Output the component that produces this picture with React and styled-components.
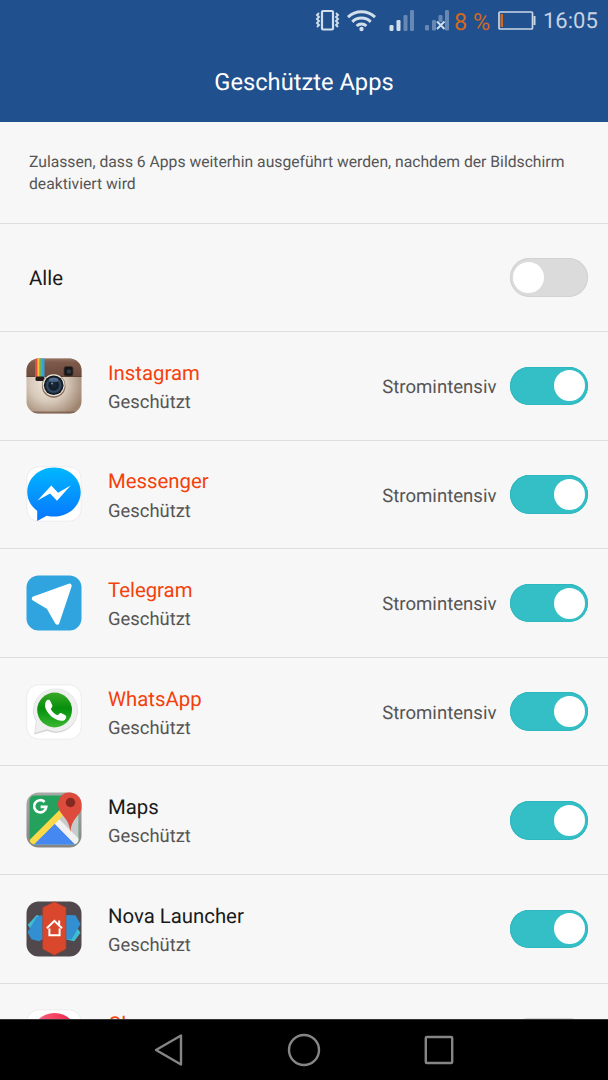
import React from 'react';
import styled, { createGlobalStyle } from 'styled-components';

const GlobalStyle = createGlobalStyle`
  * { box-sizing: border-box; }
  body {
    margin: 0;
    background: #f7f7f7;
    font-family: Roboto, "Liberation Sans", sans-serif;
    text-rendering: geometricPrecision;
  }
`;

const Screen = styled.div`
  width: 608px;
  height: 1080px;
  display: flex;
  flex-direction: column;
  overflow: hidden;
  background: #f7f7f7;
`;

const Header = styled.header`
  height: 121.5px;
  flex: none;
  background: #20508e;
  color: #fff;
`;

const StatusBar = styled.div`
  height: 42px;
  padding-right: 10px;
  display: flex;
  align-items: center;
  justify-content: flex-end;
`;

const StatusIcons = styled.svg`
  display: block;
  margin-right: 5px;
`;

const BatteryText = styled.span`
  width: 43.5px;
  padding-top: 1px;
  color: #d0691f;
  font-size: 23.5px;
  line-height: 42px;
  white-space: nowrap;
`;

const Clock = styled.span`
  margin-left: 7.5px;
  width: 55px;
  padding-top: 1px;
  color: #c6d3e4;
  font-size: 22px;
  line-height: 42px;
`;

const Title = styled.h1`
  margin: 0;
  height: 81px;
  line-height: 81px;
  text-align: center;
  font-size: 23.7px;
  font-weight: 400;
`;

const Content = styled.main`
  flex: 1;
  min-height: 0;
  overflow: hidden;
`;

const Info = styled.p`
  margin: 0;
  height: 102px;
  padding: 29.3px 28px 0 29px;
  border-bottom: 1px solid #dedede;
  color: #555;
  font-size: 15.7px;
  line-height: 22.6px;
`;

const Row = styled.div`
  height: 108.6px;
  padding: 0 20px 0 ${(p) => (p.$plain ? 29 : 26)}px;
  display: flex;
  align-items: center;
  border-bottom: 1px solid #dedede;
`;

const AppIcon = styled.svg`
  display: block;
  flex: none;
  margin-right: 26px;
`;

const Labels = styled.div`
  flex: 1;
  display: flex;
  flex-direction: column;
  gap: 2.2px;
  padding-top: ${(p) => (p.$single ? 2 : 4)}px;
`;

const Name = styled.span`
  font-size: 20.35px;
  line-height: 28px;
  color: ${(p) => (p.$hungry ? '#f4410b' : '#1a1a1a')};
`;

const State = styled.span`
  min-height: 28px;
  font-size: 18.4px;
  line-height: 28px;
  color: #555;
`;

const Usage = styled.span`
  margin-right: 13.5px;
  padding-top: 2.4px;
  font-size: 18.6px;
  color: #555;
`;

const Track = styled.span`
  width: 78px;
  height: 38.5px;
  flex: none;
  padding: 0 3px;
  display: flex;
  align-items: center;
  justify-content: ${(p) => (p.$on ? 'flex-end' : 'flex-start')};
  border-radius: 20px;
  background: ${(p) => (p.$on ? '#34bfc6' : '#dbdbdb')};
  box-shadow: inset 0 0 0 1px ${(p) => (p.$on ? '#2eb7be' : '#d2d2d2')};
`;

const Knob = styled.span`
  width: 31px;
  height: 31px;
  border-radius: 50%;
  background: #fff;
`;

const NavBar = styled.nav`
  height: 61px;
  flex: none;
  display: flex;
  justify-content: center;
  align-items: center;
  gap: 99px;
  background: #000;
  border-top: 1px solid #333;
`;

const NavIcon = styled.svg`
  display: block;
  fill: none;
  stroke: #858585;
  stroke-width: 2.4;
  stroke-linejoin: round;
`;

function Switch({ on }) {
  return (
    <Track $on={on} role="switch" aria-checked={!!on}>
      <Knob />
    </Track>
  );
}

function Tile({ children }) {
  return (
    <AppIcon width="56" height="56" viewBox="0 0 56 56">
      {children}
    </AppIcon>
  );
}

const WhiteTile = () => (
  <rect x="0.8" y="0.8" width="54.4" height="54.4" rx="12" fill="#fff" stroke="#ececec" strokeWidth="1" />
);

function InstagramIcon() {
  return (
    <Tile>
      <defs>
        <clipPath id="ig"><rect x="0.5" y="0.5" width="55" height="55" rx="12" /></clipPath>
        <linearGradient id="igTop" x2="0" y2="1">
          <stop stopColor="#987666" /><stop offset=".25" stopColor="#7c5949" /><stop offset="1" stopColor="#6c4b3e" />
        </linearGradient>
        <radialGradient id="igBody" cx=".4" cy=".45" r=".65">
          <stop stopColor="#f0e9df" /><stop offset=".5" stopColor="#d8cabb" /><stop offset="1" stopColor="#a08672" />
        </radialGradient>
        <radialGradient id="igLens">
          <stop stopColor="#1c2a3c" /><stop offset=".45" stopColor="#131b27" /><stop offset=".68" stopColor="#34506f" /><stop offset=".85" stopColor="#17202c" /><stop offset="1" stopColor="#0c0f14" />
        </radialGradient>
      </defs>
      <g clipPath="url(#ig)">
        <rect width="56" height="56" fill="url(#igBody)" />
        <rect width="56" height="18.5" fill="url(#igTop)" />
        <rect y="18" width="56" height="1" fill="#5e4135" />
        <rect x="9" width="2.4" height="19" fill="#e64b43" />
        <rect x="11.4" width="2.3" height="19" fill="#f6c544" />
        <rect x="13.7" width="2.3" height="19" fill="#69b352" />
        <rect x="16" width="2.5" height="19" fill="#3aa0d8" />
        <rect y="53.500" width="56" height="2.500" fill="#755444" opacity=".7" />
      </g>
      <rect x="9.5" y="18.5" width="9" height="4.5" rx="1.5" fill="#241b19" />
      <rect x="38" y="8.5" width="9" height="9.5" rx="2" fill="#17171b" stroke="#4a332b" strokeWidth=".8" />
      <circle cx="43" cy="13.5" r="2.3" fill="#343a44" />
      <circle cx="27.7" cy="27.9" r="11.8" fill="#846c5b" />
      <circle cx="27.7" cy="27.3" r="11" fill="#e8e0d7" />
      <circle cx="27.7" cy="27.3" r="9.8" fill="url(#igLens)" />
      <ellipse cx="27.7" cy="22" rx="4.6" ry="2.2" fill="#7196bd" opacity=".55" />
      <circle cx="26" cy="25.5" r="1.1" fill="#7288a0" />
    </Tile>
  );
}

function MessengerIcon() {
  return (
    <Tile>
      <defs>
        <linearGradient id="ms" x2="0" y2="1"><stop stopColor="#00b7ff" /><stop offset="1" stopColor="#0775ff" /></linearGradient>
      </defs>
      <WhiteTile />
      <path d="M28 1.500C13 1.500 1.300 12.500 1.300 26c0 7.500 3.500 14.200 9.900 18.700V55l9.600-5.200c2.300.6 4.700.8 7.200.8 15 0 26.700-11 26.700-24.600S43 1.500 28 1.500Z" fill="url(#ms)" />
      <path d="M11.500 34.500 25.300 19.600l6.700 7.100 12.600-7.100L31 34.700l-6.900-7.300Z" fill="#fff" />
    </Tile>
  );
}

function TelegramIcon() {
  return (
    <Tile>
      <rect x="0.5" y="0.5" width="55" height="55" rx="12" fill="#2fa4df" />
      <path d="M8 23.500 43.500 10.800 31.200 47.500 22.300 32Z" fill="#fff" stroke="#fff" strokeWidth="4.400" strokeLinejoin="round" />
    </Tile>
  );
}

function WhatsAppIcon() {
  return (
    <Tile>
      <defs>
        <linearGradient id="wa" x2="0" y2="1"><stop stopColor="#38a825" /><stop offset=".45" stopColor="#078f0d" /><stop offset=".6" stopColor="#129b16" /><stop offset="1" stopColor="#3bb832" /></linearGradient>
      </defs>
      <WhiteTile />
      <path d="M29 5.500a21.600 21.600 0 0 0-18.900 32L8.300 50.600l12.900-3.800A21.600 21.600 0 1 0 29 5.500Z" fill="#cdcdcd" />
      <path d="M29 4.900a21.400 21.400 0 0 0-18.700 32L8.600 49.300l12.600-3.700A21.400 21.400 0 1 0 29 4.900Z" fill="#efefef" stroke="#dcdcdc" strokeWidth=".5" />
      <circle cx="28.600" cy="26" r="17.400" fill="url(#wa)" />
      <path d="M20.200 17c1-1.500 3.200-1.800 4.100 0l2.100 4.400c.5 1.200-1.600 2.800-1.600 3.700 1.200 2.600 4 5.200 6.600 6.200 1 .1 2.300-2.600 3.700-2.200l4.300 2.200c1.500.9.700 3.500-.7 4.600-2.500 1.800-7.100 1-11.400-2.100-4.300-3-7.900-7.800-8.200-11.600-.1-1.900.3-4 1.100-5.200Z" fill="#fff" />
    </Tile>
  );
}

function MapsIcon() {
  return (
    <Tile>
      <defs>
        <clipPath id="mpOut"><rect x="0.5" y="0.5" width="55" height="55" rx="12" /></clipPath>
        <clipPath id="mp"><rect x="3.500" y="3.500" width="49" height="49" rx="5" /></clipPath>
        <linearGradient id="mpEdge" x2="0" y2="1"><stop stopColor="#a9a9a7" /><stop offset="1" stopColor="#858585" /></linearGradient>
      </defs>
      <g clipPath="url(#mpOut)">
        <rect width="56" height="56" fill="url(#mpEdge)" />
        <g clipPath="url(#mp)">
          <rect width="56" height="56" fill="#24a15d" />
          <path d="M28 32 56 4v52H4Z" fill="#c9cacb" />
          <path d="M4 56 28.500 31.500 53 56Z" fill="#4688f2" />
          <path d="M28.500 31.500l4.500-4.500 22 22v9h-0.500Z" fill="#f1f1f1" />
          <path d="M0 51.500 37.500 14l4.600 4.600L4.500 56H0Z" fill="#fcd949" />
        </g>
        <path d="M44.200 0C37 0 32 5.700 32 12.500c0 5.200 3 8.400 6.200 12.400 3.500 4.200 5.700 8.800 6.100 15.100.5-6.300 2.600-10.900 6.200-15.100 3.300-4 6-7.200 6-12.400C56.500 5.700 51.400 0 44.200 0Z" fill="#dd4b3c" />
      </g>
      <circle cx="44.500" cy="10.500" r="4.700" fill="#852820" />
      <path d="M18.600 10a6.100 6.100 0 1 0 1.700 4.900h-5.700" fill="none" stroke="#fff" strokeWidth="2.600" />
    </Tile>
  );
}

function NovaIcon() {
  return (
    <Tile>
      <rect x="0.5" y="0.5" width="55" height="55" rx="12" fill="#50484c" />
      <path d="M1.700 23.700 10.700 13.900 17 16 10 37Z" fill="#3fbdd3" />
      <path d="M54.500 31.700 48.300 40.300 40 38.500 50 25Z" fill="#3fbdd3" />
      <path d="M1.500 31.200 10.500 16.200 17 13.700V38L13 40.300 5.500 38.200Z" fill="#3290d2" />
      <path d="M39.500 14 49.500 14.300 54.500 23 45.500 38.500 39.500 38Z" fill="#3290d2" />
      <path d="M28.400.8 40 6.500V48L28.400 54.200 16.700 48V6.500Z" fill="#d9482c" stroke="#a83e2c" strokeWidth=".6" />
      <path d="M20.800 27.300 28.400 19.800l7.600 7.500M23.400 27.500v6.700h10.200v-6.700M33.200 19.500v4" fill="none" stroke="#fff" strokeWidth="2" />
    </Tile>
  );
}

function ClueIcon() {
  return (
    <Tile>
      <defs>
        <linearGradient id="cl" x1="0" x2="1"><stop stopColor="#ff6a8a" /><stop offset="1" stopColor="#ea1f40" /></linearGradient>
      </defs>
      <WhiteTile />
      <circle cx="28.500" cy="27.500" r="23.500" fill="url(#cl)" />
    </Tile>
  );
}

const apps = [
  { name: 'Instagram', state: 'Geschützt', Icon: InstagramIcon, hungry: true, intensive: true, on: true },
  { name: 'Messenger', state: 'Geschützt', Icon: MessengerIcon, hungry: true, intensive: true, on: true },
  { name: 'Telegram', state: 'Geschützt', Icon: TelegramIcon, hungry: true, intensive: true, on: true },
  { name: 'WhatsApp', state: 'Geschützt', Icon: WhatsAppIcon, hungry: true, intensive: true, on: true },
  { name: 'Maps', state: 'Geschützt', Icon: MapsIcon, on: true },
  { name: 'Nova Launcher', state: 'Geschützt', Icon: NovaIcon, on: true },
  { name: 'Clue', Icon: ClueIcon, hungry: true },
];

function StatusGlyphs() {
  return (
    <StatusIcons width="134" height="42" viewBox="315 0 134 42">
      <g fill="none" stroke="#d3deeb">
        <rect x="322" y="11" width="11" height="18.500" rx="1" strokeWidth="2.200" />
        <path d="M319 13l-2 2 2 2-2 2 2 2-2 2 2 2-2 2M336 13l2 2-2 2 2 2-2 2 2 2-2 2 2 2" strokeWidth="1.900" />
        <path d="M348 17.200a19.500 19.500 0 0 1 27 0M352.300 21.800a13.200 13.200 0 0 1 18.400 0M356.600 26a7 7 0 0 1 9.800 0" strokeWidth="3" />
      </g>
      <circle cx="361.500" cy="29" r="2.200" fill="#d3deeb" />
      <g fill="#d3deeb">
        <rect x="389.500" y="25" width="4" height="6" rx="1.300" />
        <rect x="396.500" y="20" width="4" height="11" rx="1.300" />
      </g>
      <g fill="#6788b3">
        <rect x="403.500" y="15" width="4" height="16" rx="1.300" />
        <rect x="410" y="10" width="4" height="21" rx="1.300" />
        <rect x="425" y="25" width="4" height="5.500" rx="1.300" />
        <rect x="432" y="20" width="4" height="10.500" rx="1.300" />
        <rect x="438.500" y="15" width="4" height="7" rx="1.300" />
        <rect x="445" y="10" width="4" height="20.500" rx="1.300" />
      </g>
      <path d="M437 21.500l7.500 7.500M444.500 21.500 437 29" stroke="#d3deeb" strokeWidth="2" />
    </StatusIcons>
  );
}

export default function App() {
  return (
    <>
      <GlobalStyle />
      <Screen>
        <Header>
          <StatusBar>
            <StatusGlyphs />
            <BatteryText>8 %</BatteryText>
            <svg width="38" height="42" viewBox="498 0 38 42">
              <rect x="499" y="12" width="33.500" height="17" rx="1" fill="none" stroke="#c9d6e6" strokeWidth="1.700" />
              <rect x="533.500" y="16" width="2" height="9" fill="#c9d6e6" />
              <rect x="500.500" y="14" width="2.500" height="13" fill="#d0691f" />
            </svg>
            <Clock>16:05</Clock>
          </StatusBar>
          <Title>Geschützte Apps</Title>
        </Header>
        <Content>
          <Info>
            Zulassen, dass 6 Apps weiterhin ausgeführt werden, nachdem der Bildschirm deaktiviert wird
          </Info>
          <Row $plain>
            <Labels $single><Name>Alle</Name></Labels>
            <Switch />
          </Row>
          {apps.map(({ name, state, Icon, hungry, intensive, on }) => (
            <Row key={name}>
              <Icon />
              <Labels>
                <Name $hungry={hungry}>{name}</Name>
                <State>{state}</State>
              </Labels>
              {intensive && <Usage>Stromintensiv</Usage>}
              <Switch on={on} />
            </Row>
          ))}
        </Content>
        <NavBar>
          <NavIcon width="36" height="36" viewBox="0 0 36 36"><path d="M5 18 30 3.500v29Z" /></NavIcon>
          <NavIcon width="36" height="36" viewBox="0 0 36 36"><circle cx="18" cy="18" r="15" /></NavIcon>
          <NavIcon width="36" height="36" viewBox="0 0 36 36"><rect x="4.800" y="5" width="26.400" height="26" rx="1" /></NavIcon>
        </NavBar>
      </Screen>
    </>
  );
}
